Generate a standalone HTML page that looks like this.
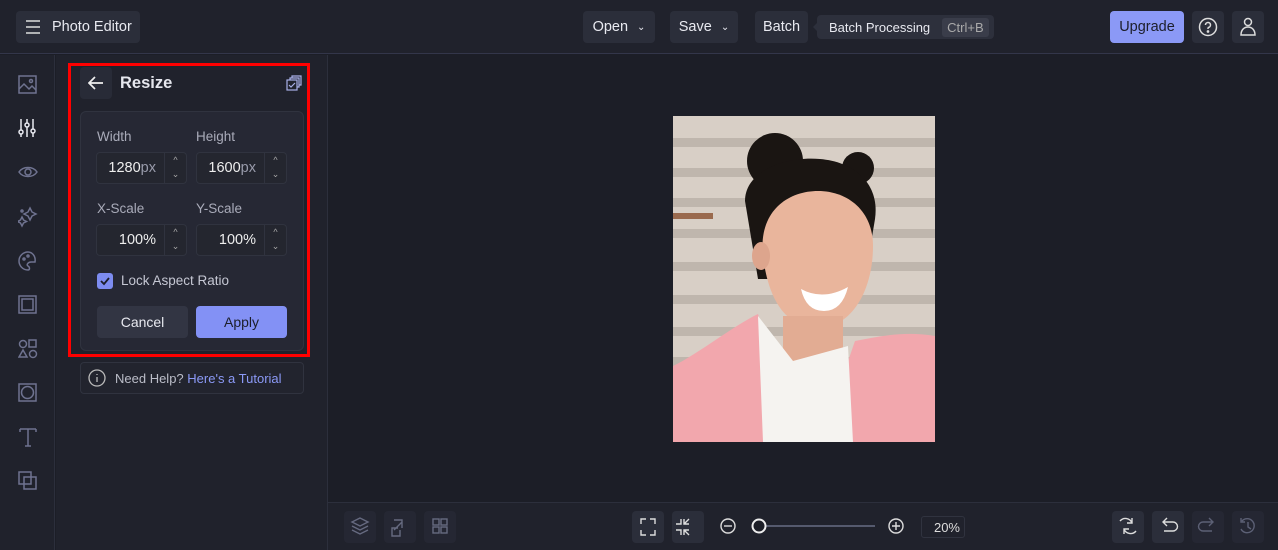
<!DOCTYPE html>
<html><head><meta charset="utf-8"><style>
*{box-sizing:border-box;margin:0;padding:0}
body{width:1278px;height:550px;background:#1c1e27;font-family:"Liberation Sans",sans-serif;color:#e6e7ee;position:relative;overflow:hidden}
.abs{position:absolute}
.btn{position:absolute;background:#2b2e3a;border-radius:4px;color:#e8e9f0;font-size:14.5px;display:flex;align-items:center;justify-content:center}
.top{left:0;top:0;width:1278px;height:54px;background:#20222c;border-bottom:1px solid #33364a}
.rail{left:0;top:55px;width:55px;height:495px;background:#20222c;border-right:1px solid #2c2f3c}
.panel{left:56px;top:55px;width:272px;height:495px;background:#20222c;border-right:1px solid #2c2f3c}
.bottom{left:328px;top:502px;width:950px;height:48px;background:#20222c;border-top:1px solid #2c2f3c}
.lbl{position:absolute;font-size:13.5px;color:#a9abb9}
.inp{position:absolute;width:91px;height:32px;border:1px solid #30333f;border-radius:4px;background:#24262f}
.inp .v{position:absolute;right:30px;top:7px;font-size:14.5px;color:#eee}
.inp .v span{color:#999bab}
.inp .s{position:absolute;right:0;top:0;width:22px;height:30px;border-left:1px solid #30333f;color:#aaa;font-size:9px;text-align:center;line-height:14px}
svg{position:absolute}
</style></head><body>
<div class="abs top"></div>
<div class="btn" style="left:16px;top:11px;width:124px;height:32px;justify-content:flex-start;padding-left:36px">Photo Editor</div>
<svg style="left:25px;top:19px" width="16" height="16" stroke="#ddd" stroke-width="1.6"><path d="M1 2h14M1 8h14M1 14h14"/></svg>
<div class="btn" style="left:583px;top:11px;width:72px;height:32px">Open <span style="font-size:10px;margin-left:9px">⌄</span></div>
<div class="btn" style="left:670px;top:11px;width:68px;height:32px">Save <span style="font-size:10px;margin-left:9px">⌄</span></div>
<div class="btn" style="left:755px;top:11px;width:53px;height:32px">Batch</div>
<svg style="left:811px;top:21px" width="8" height="12"><path d="M8 0L2 6l6 6z" fill="#2d303c"/></svg>
<div class="btn" style="left:817px;top:15px;width:177px;height:24px;background:#2d303c;font-size:13px;justify-content:flex-start;padding-left:12px">Batch Processing<span style="margin-left:12px;background:#3a3d4a;padding:2px 5px;border-radius:3px;color:#aaa">Ctrl+B</span></div>
<div class="btn" style="left:1110px;top:11px;width:74px;height:32px;background:#8b99f6;color:#1c1e2a">Upgrade</div>
<div class="btn" style="left:1192px;top:11px;width:32px;height:32px"></div>
<svg style="left:1198px;top:17px" width="20" height="20" fill="none" stroke="#ddd" stroke-width="1.5"><circle cx="10" cy="10" r="8.5"/><path d="M7.5 8a2.5 2.5 0 1 1 3 2.4c-.5.2-.5.6-.5 1.6"/><circle cx="10" cy="14.5" r=".6" fill="#ddd"/></svg>
<div class="btn" style="left:1232px;top:11px;width:32px;height:32px"></div>
<svg style="left:1239px;top:17px" width="18" height="20" fill="none" stroke="#ddd" stroke-width="1.5"><circle cx="9" cy="5" r="3.5"/><path d="M2 18c0-5 3-8 7-8s7 3 7 8z"/></svg>

<div class="abs rail"></div>
<svg style="left:18px;top:75px" width="20" height="420" fill="none" stroke="#6f7390" stroke-width="1.5">
<rect x="1" y="1" width="17" height="17"/><path d="M1 14l5-5 5 5 3-3 4 4"/><circle cx="13" cy="6" r="1.5"/>
<g stroke="#e8e9f0" transform="translate(0,44)"><path d="M3 0v18M9 0v18M15 0v18"/><circle cx="3" cy="13" r="2" fill="#20222c"/><circle cx="9" cy="6" r="2" fill="#20222c"/><circle cx="15" cy="12" r="2" fill="#20222c"/></g>
<g transform="translate(0,88)"><path d="M1 9c4-6 14-6 18 0-4 6-14 6-18 0z"/><circle cx="10" cy="9" r="3"/></g>
<g transform="translate(0,132)"><path d="M12 1l2 4 4 2-4 2-2 4-2-4-4-2 4-2z"/><circle cx="4" cy="4" r="1"/><path d="M4 10l1.5 3 3 1.5-3 1.5-1.5 3-1.5-3-3-1.5 3-1.5z"/></g>
<g transform="translate(0,176)"><path d="M10 1a9 9 0 1 0 0 18c2 0 2-3 0-4s0-4 3-4h4c1-6-3-10-7-10z"/><circle cx="6" cy="8" r="1"/><circle cx="10" cy="5" r="1"/></g>
<g transform="translate(0,220)"><rect x="1" y="1" width="17" height="17"/><rect x="4" y="4" width="11" height="11"/></g>
<g transform="translate(0,264)"><circle cx="5" cy="5" r="3.5"/><rect x="11" y="1" width="7" height="7"/><path d="M5 11l4 7H1z"/><circle cx="15" cy="15" r="3.5"/></g>
<g transform="translate(0,308)"><rect x="1" y="1" width="17" height="17"/><circle cx="9.5" cy="9.5" r="6"/></g>
<g transform="translate(0,352)"><path d="M2 2h16M10 2v17M2 2v3M18 2v3M7 19h6"/></g>
<g transform="translate(0,396)"><rect x="1" y="1" width="12" height="12"/><rect x="6" y="6" width="12" height="12"/></g>
</svg>

<div class="abs panel"></div>
<div class="abs" style="left:68px;top:63px;width:242px;height:294px;border:3px solid #f00"></div>
<div class="btn" style="left:80px;top:67px;width:32px;height:32px;background:#282b37"></div>
<svg style="left:88px;top:75px" width="16" height="16" fill="none" stroke="#eee" stroke-width="1.7"><path d="M15 8H1M7 2L1 8l6 6"/></svg>
<div class="abs" style="left:120px;top:74px;font-size:16.5px;font-weight:bold">Resize</div>
<svg style="left:286px;top:75px" width="16" height="16" fill="none" stroke="#a9b0e8" stroke-width="1.2"><rect x="1" y="5" width="10" height="10"/><path d="M4 5V3h9v9h-2M6 3V1h9v9h-2"/><path d="M3 10l2 2 4-4"/></svg>
<div class="abs" style="left:80px;top:111px;width:224px;height:240px;background:#262834;border:1px solid #30333f;border-radius:6px"></div>
<div class="lbl" style="left:97px;top:129px">Width</div>
<div class="lbl" style="left:196px;top:129px">Height</div>
<div class="inp" style="left:96px;top:152px"><div class="v">1280<span>px</span></div><div class="s">^<br>⌄</div></div>
<div class="inp" style="left:196px;top:152px"><div class="v">1600<span>px</span></div><div class="s">^<br>⌄</div></div>
<div class="lbl" style="left:97px;top:201px">X-Scale</div>
<div class="lbl" style="left:196px;top:201px">Y-Scale</div>
<div class="inp" style="left:96px;top:224px"><div class="v">100%</div><div class="s">^<br>⌄</div></div>
<div class="inp" style="left:196px;top:224px"><div class="v">100%</div><div class="s">^<br>⌄</div></div>
<div class="abs" style="left:97px;top:273px;width:16px;height:16px;background:#7d8cf0;border-radius:3px"></div>
<svg style="left:99px;top:275px" width="12" height="12" fill="none" stroke="#1c1e2a" stroke-width="1.8"><path d="M2 6l3 3 5-6"/></svg>
<div class="abs" style="left:121px;top:273px;font-size:13.5px;color:#c5c7d3">Lock Aspect Ratio</div>
<div class="btn" style="left:97px;top:306px;width:91px;height:32px;background:#323543;font-size:14px">Cancel</div>
<div class="btn" style="left:196px;top:306px;width:91px;height:32px;background:#8391f5;color:#1c1e2a;font-size:14px">Apply</div>
<div class="abs" style="left:80px;top:362px;width:224px;height:32px;border:1px solid #30333f;border-radius:4px;background:#22242e"></div>
<svg style="left:88px;top:369px" width="18" height="18" fill="none" stroke="#bbb" stroke-width="1.3"><circle cx="9" cy="9" r="8"/><path d="M9 8v5M9 5v1"/></svg>
<div class="abs" style="left:115px;top:371px;font-size:13px;color:#bbbdc8">Need Help? <span style="color:#8b99f6">Here's a Tutorial</span></div>

<svg style="left:673px;top:116px" width="262" height="326" viewBox="0 0 262 326">
<rect width="262" height="326" fill="#d8cfc6"/>
<g fill="#a89e95" opacity=".5"><rect y="22" width="262" height="9"/><rect y="52" width="262" height="9"/><rect y="82" width="262" height="9"/><rect y="113" width="262" height="9"/><rect y="146" width="262" height="9"/><rect y="179" width="262" height="9"/><rect y="211" width="262" height="9"/><rect y="241" width="262" height="9"/></g>
<rect x="0" y="97" width="40" height="6" fill="#9a6a4e"/>
<circle cx="102" cy="45" r="28" fill="#1a1512"/>
<circle cx="185" cy="52" r="16" fill="#1a1512"/>
<path d="M72 85c0-30 40-45 75-42 35 3 60 25 55 60l-10 60H85z" fill="#1a1512"/>
<path d="M90 140c-5-45 25-65 55-65s55 20 55 55c0 45-22 82-55 82s-50-30-55-72z" fill="#e9b59c"/>
<ellipse cx="88" cy="140" rx="9" ry="14" fill="#dda58d"/>
<path d="M128 173q22 12 47-2q-6 24-24 24q-18 0-23-22z" fill="#fff"/>
<path d="M110 200h60v50h-60z" fill="#e2ac93"/>
<path d="M0 250c25-12 60-40 85-52l40 128H0z" fill="#f2a7ad"/>
<path d="M262 220c-30-5-55 0-80 5l-35 101h115z" fill="#f2a7ad"/>
<path d="M85 200l35 45 55-15 5 96H90z" fill="#f5f3f0"/>
</svg>

<div class="abs bottom"></div>
<div class="btn" style="left:344px;top:511px;width:32px;height:32px;background:#252733"></div>
<div class="btn" style="left:384px;top:511px;width:32px;height:32px;background:#252733"></div>
<div class="btn" style="left:424px;top:511px;width:32px;height:32px;background:#252733"></div>
<div class="btn" style="left:632px;top:511px;width:32px;height:32px"></div>
<div class="btn" style="left:672px;top:511px;width:32px;height:32px"></div>
<div class="btn" style="left:1112px;top:511px;width:32px;height:32px"></div>
<div class="btn" style="left:1152px;top:511px;width:32px;height:32px"></div>
<div class="btn" style="left:1192px;top:511px;width:32px;height:32px;background:#252733"></div>
<div class="btn" style="left:1232px;top:511px;width:32px;height:32px;background:#252733"></div>
<svg style="left:0;top:0" width="1278" height="550" fill="none" stroke-width="1.4">
<g stroke="#666a80"><path d="M360 518l-8 4 8 4 8-4zM352 526l8 4 8-4M352 530l8 4 8-4"/><path d="M394 520h8v8M398 528h-6v8h8v-6M394 530l8-8"/><rect x="433" y="519" width="6" height="6"/><rect x="441" y="519" width="6" height="6"/><rect x="433" y="527" width="6" height="6"/><rect x="441" y="527" width="6" height="6"/></g>
<g stroke="#ddd"><path d="M641 524v-5h5M650 519h5v5M655 530v5h-5M646 535h-5v-5"/><path d="M681 519v5h-5M684 524l5-5M681 535v-5h-5M684 530l5 5M689 524h-5v-5M689 530h-5v5"/>
<circle cx="728" cy="526" r="7"/><path d="M724 526h8"/><circle cx="896" cy="526" r="7"/><path d="M892 526h8M896 522v8"/>
<path d="M1120 521a7 7 0 0 1 12 2M1136 531a7 7 0 0 1-12-2M1132 518v5h-5M1124 534v-5h5"/>
<path d="M1164 522h9a4 4 0 0 1 0 9h-9M1167 518l-4 4 4 4"/></g>
<g stroke="#5c6075"><path d="M1212 522h-9a4 4 0 0 0 0 9h9M1209 518l4 4-4 4"/><path d="M1242 521a7 7 0 1 1-1 8M1248 522v5l3 2M1241 518v4h4"/></g>
<path d="M765 526h110" stroke="#555a6e" stroke-width="2"/>
<circle cx="759" cy="526" r="6.5" fill="#1c1e27" stroke="#eee" stroke-width="2"/>
</svg>
<div class="abs" style="left:921px;top:516px;width:44px;height:22px;border:1px solid #30333f;border-radius:3px;font-size:13px;text-align:right;padding:3px 4px 0 0;color:#ddd">20%</div>
</body></html>
